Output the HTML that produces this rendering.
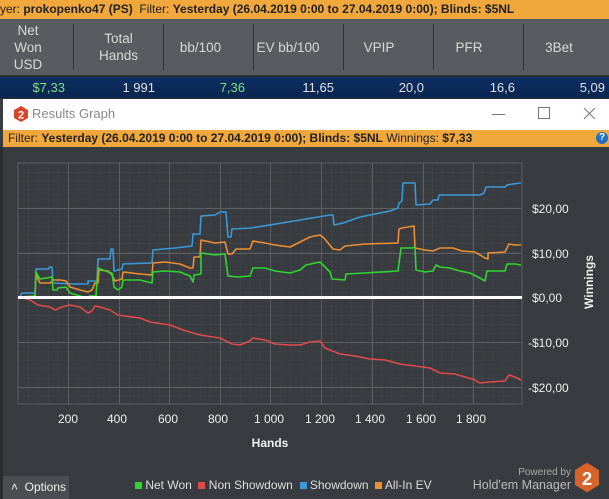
<!DOCTYPE html>
<html><head><meta charset="utf-8"><style>
*{margin:0;padding:0;box-sizing:border-box}
body{width:609px;height:499px;overflow:hidden;background:#383b3f;font-family:"Liberation Sans",sans-serif;position:relative}
.abs{position:absolute}
.top{left:0;top:0;width:609px;height:19px;background:#f0a83c;font-size:12px;line-height:19px;color:#222;white-space:nowrap}
.hdr{left:0;top:19px;width:609px;height:56px;background:#585c60}
.hdr div{position:absolute;color:#d8d8d8;font-size:13.5px;text-align:center;line-height:17px}
.dv{position:absolute;top:5px;width:1px;height:46px;background:#2f3235}
.row{left:0;top:77px;width:609px;height:21px;background:linear-gradient(#0d2f63,#0a2550);font-size:13px;line-height:21px;color:#e0e0e0}
.row span{position:absolute;text-align:right}
.title{left:3px;top:99px;width:606px;height:31px;background:#fff}
.filt{left:3px;top:130px;width:606px;height:17px;background:#f0a83c;font-size:12px;line-height:17px;color:#222;padding-left:5px;white-space:nowrap}
.lab{color:#eee;font-size:12px}
</style></head><body>
<div class="abs" style="left:0;top:0;width:609px;height:99px;background:#2e3134"></div>
<div class="abs top">yer: <b>prokopenko47 (PS)</b>&nbsp;&nbsp;Filter: <b>Yesterday (26.04.2019 0:00 to 27.04.2019 0:00); Blinds: $5NL</b></div>
<div class="abs hdr">
<div style="left:0;width:56px;top:3px">Net<br>Won<br>USD</div>
<div style="left:74px;width:89px;top:11px">Total<br>Hands</div>
<div style="left:163px;width:75px;top:20px">bb/100</div>
<div style="left:254px;width:68px;top:20px">EV bb/100</div>
<div style="left:344px;width:70px;top:20px">VPIP</div>
<div style="left:434px;width:70px;top:20px">PFR</div>
<div style="left:523px;width:72px;top:20px">3Bet</div>
<span class="dv" style="left:73px"></span><span class="dv" style="left:163px"></span><span class="dv" style="left:253px"></span><span class="dv" style="left:343px"></span><span class="dv" style="left:433px"></span><span class="dv" style="left:523px"></span>
</div>
<div class="abs row">
<span style="right:544px;color:#7de07d">$7,33</span>
<span style="right:454px">1 991</span>
<span style="right:364px;color:#7de07d">7,36</span>
<span style="right:275px">11,65</span>
<span style="right:185px">20,0</span>
<span style="right:94px">16,6</span>
<span style="right:4px">5,09</span>
</div>
<div class="abs title">
<svg class="abs" style="left:10px;top:7px" width="16" height="16" viewBox="0 0 16 16"><polygon points="8,0 15,4 15,12 8,16 1,12 1,4" fill="#d9452a"/><text x="8" y="12.5" text-anchor="middle" font-size="11" font-weight="bold" fill="#fff" font-family="Liberation Sans">2</text></svg>
<div class="abs" style="left:29px;top:7px;font-size:13px;color:#888">Results Graph</div>
<div class="abs" style="left:489px;top:15px;width:13px;height:1px;background:#777"></div>
<div class="abs" style="left:535px;top:8px;width:12px;height:12px;border:1px solid #777"></div>
<svg class="abs" style="left:580px;top:8px" width="13" height="13"><path d="M1 1L12 12M12 1L1 12" stroke="#777" stroke-width="1"/></svg>
</div>
<div class="abs filt">Filter: <b>Yesterday (26.04.2019 0:00 to 27.04.2019 0:00); Blinds: $5NL</b> Winnings: <b>$7,33</b></div>
<div class="abs" style="left:596px;top:132px;width:12px;height:12px;border-radius:50%;background:#1e6fc8;color:#fff;font-size:10px;font-weight:bold;text-align:center;line-height:12px">?</div>
<div class="abs" style="left:0;top:147px;width:3px;height:352px;background:#2a2d30"></div>
<svg class="abs" style="left:0;top:0" width="609" height="499">
<defs>
<pattern id="mn" x="18" y="163" width="10.1" height="8.95" patternUnits="userSpaceOnUse"><path d="M0 0V9M0 0H11" stroke="#45484c" stroke-width="1" fill="none"/></pattern>
</defs>
<rect x="18" y="163" width="504" height="241" fill="url(#mn)" stroke="#5a5d61"/>
<g stroke="#5c5f63" stroke-width="1">
<path d="M68.5 163V404M119.5 163V404M169.5 163V404M220.5 163V404M270.5 163V404M321.5 163V404M372.5 163V404M423.5 163V404M473.5 163V404"/>
<path d="M18 208.5H522M18 253.5H522M18 342.5H522M18 387.5H522"/>
</g>
<g fill="none" stroke-width="1.6" stroke-linejoin="round">
<polyline stroke="#e04a4a" points="20,297 30,300 38,305 50,307 55,310 62,307 70,305 80,307 88,313 92,311 95,306 100,307 110,310 118,315 125,316 140,318 150,322 170,325 183,330 200,335 220,338 232,344 240,345 250,341 253,338 265,340 275,344 290,345 300,345 310,342 320,341 325,348 340,354 355,356 370,359 385,360 400,364 415,366 430,368 440,373 455,374 465,377 475,380 480,383 490,382 505,381 509,375 515,377 521,380"/>
<polyline stroke="#3a9ad9" points="20,297 22,293 35,293 36,269 48,269 50,267 52,267 53,283 72,284 88,284 88,281 97,281 98,259 110,259 111,249 113,249 114,271 122,269 123,264 152,263 153,250 175,248 192,246 193,234 200,234 201,216 215,215 220,212 226,212 228,237 231,237 232,229 251,228 300,220 330,215 333,215 334,225 343,223 360,217 370,215 390,211 398,208 399,203 402,201 403,183 415,183 416,205 430,204 433,200 438,200 439,195 480,195 484,193 486,187 505,187 507,185 513,184 521,183"/>
<polyline stroke="#ee8f30" points="20,297 35,297 36,275 40,283 50,283 53,280 60,280 66,281 70,287 80,290 88,292 92,290 95,283 98,283 99,270 108,271 112,275 115,281 122,279 123,272 140,274 152,275 153,263 165,262 180,264 190,268 193,268 194,257 200,257 201,240 215,243 225,242 228,254 232,254 236,249 250,249 253,241 265,243 275,245 290,247 300,242 310,237 320,235 324,238 333,249 340,250 345,246 365,244 398,243 399,229 402,228 414,226 415,248 425,250 433,251 440,248 453,248 462,251 475,252 485,258 488,259 488,253 505,252 509,244 515,245 521,245"/>
<polyline stroke="#2fd62f" points="20,297 35,296 36,272 40,279 52,277 53,290 57,290 58,288 66,287 70,293 80,296 86,298 90,296 96,296 98,268 108,272 112,273 114,287 118,290 122,287 123,280 140,280 152,283 153,272 165,271 180,272 190,276 193,282 194,275 201,274 201,253 215,255 225,254 228,276 238,277 250,276 253,268 265,268 275,271 290,273 300,270 306,265 320,262 324,266 330,272 332,279 345,280 346,274 365,273 398,271 401,248 412,248 415,247 416,270 425,272 433,271 436,265 440,267 450,268 460,271 470,273 478,277 485,281 487,271 505,271 507,264 515,264 521,265"/>
</g>
<rect x="18" y="296" width="504" height="3" fill="#fff"/>
<g fill="#eee" font-size="12" font-family="Liberation Sans">
<text x="532" y="213">$20,00</text><text x="532" y="258">$10,00</text><text x="532" y="302">$0,00</text><text x="528" y="347">-$10,00</text><text x="528" y="392">-$20,00</text>
<g text-anchor="middle"><text x="68" y="423">200</text><text x="117" y="423">400</text><text x="168" y="423">600</text><text x="218" y="423">800</text><text x="269" y="423">1 000</text><text x="320" y="423">1 200</text><text x="370" y="423">1 400</text><text x="421" y="423">1 600</text><text x="471" y="423">1 800</text></g>
<text x="270" y="447" text-anchor="middle" font-weight="bold">Hands</text>
<text transform="translate(593,282) rotate(-90)" text-anchor="middle" font-weight="bold">Winnings</text>
</g>
</svg>
<div class="abs" style="left:3px;top:476px;width:66px;height:23px;background:#4a4d51;color:#eee;font-size:12px;line-height:23px;padding-left:8px">˄&nbsp;&nbsp;Options</div>
<div class="abs lab" style="left:135px;top:478px;white-space:nowrap;color:#ddd">
<span style="display:inline-block;width:7px;height:7px;background:#2fd62f"></span> Net Won&nbsp;
<span style="display:inline-block;width:7px;height:7px;background:#e04a4a"></span> Non Showdown&nbsp;
<span style="display:inline-block;width:7px;height:7px;background:#3a9ad9"></span> Showdown&nbsp;
<span style="display:inline-block;width:7px;height:7px;background:#ee8f30"></span> All-In EV</div>
<div class="abs" style="right:38px;top:467px;font-size:10px;color:#aaa">Powered by</div>
<div class="abs" style="right:38px;top:478px;font-size:12.5px;color:#bbb;white-space:nowrap">Hold'em Manager</div>
<svg class="abs" style="left:574px;top:462px" width="26" height="31" viewBox="0 0 28 32"><polygon points="14,0 27,8 27,24 14,32 1,24 1,8" fill="#d5632a"/><text x="14" y="24" text-anchor="middle" font-size="20" font-weight="bold" fill="#fff" font-family="Liberation Sans">2</text></svg>
</body></html>
